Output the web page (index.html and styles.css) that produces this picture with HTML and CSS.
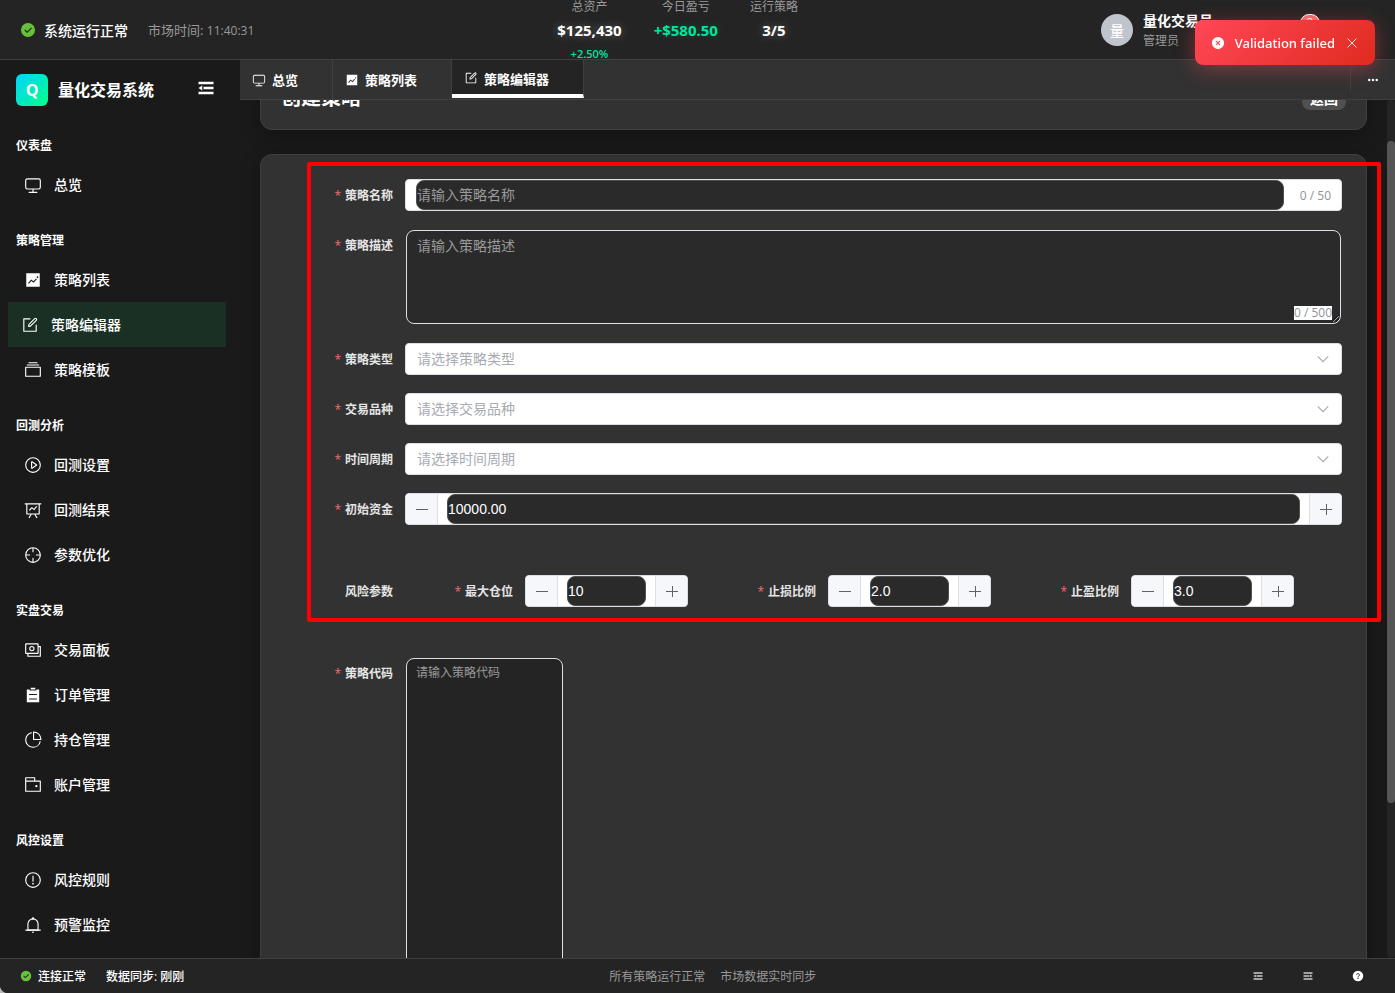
FILE: index.html
```html
<!DOCTYPE html>
<html lang="zh-CN">
<head>
<meta charset="utf-8">
<title>量化交易系统</title>
<link rel="stylesheet" href="styles.css">
</head>
<body>
<svg class="sprite" aria-hidden="true">
  <symbol id="i-monitor" viewBox="0 0 1024 1024"><path d="M544 768v128h192a32 32 0 1 1 0 64H288a32 32 0 1 1 0-64h192V768H192A128 128 0 0 1 64 640V256a128 128 0 0 1 128-128h640a128 128 0 0 1 128 128v384a128 128 0 0 1-128 128H544zM192 192a64 64 0 0 0-64 64v384a64 64 0 0 0 64 64h640a64 64 0 0 0 64-64V256a64 64 0 0 0-64-64H192z"/></symbol>
  <symbol id="i-trend" viewBox="0 0 1024 1024"><path d="M128 896V128h768v768H128zm291.712-327.296 128 102.4 180.16-201.792-47.744-42.624-139.84 156.608-128-102.4-180.16 201.792 47.744 42.624 139.84-156.608zM816 352a48 48 0 1 0-96 0 48 48 0 0 0 96 0z"/></symbol>
  <symbol id="i-edit" viewBox="0 0 1024 1024"><path d="M832 512a32 32 0 1 1 64 0v352a32 32 0 0 1-32 32H160a32 32 0 0 1-32-32V160a32 32 0 0 1 32-32h352a32 32 0 0 1 0 64H192v640h640V512z"/><path d="m469.952 554.24 52.8-7.552L847.104 222.4a32 32 0 1 0-45.248-45.248L477.44 501.44l-7.552 52.8zm422.4-422.4a96 96 0 0 1 0 135.808l-331.84 331.84a32 32 0 0 1-18.112 9.088L436.8 623.68a32 32 0 0 1-36.224-36.224l15.104-105.6a32 32 0 0 1 9.024-18.112l331.904-331.84a96 96 0 0 1 135.744 0z"/></symbol>
  <symbol id="i-files" viewBox="0 0 1024 1024"><path d="M128 384v448h768V384H128zm-32-64h832a32 32 0 0 1 32 32v512a32 32 0 0 1-32 32H96a32 32 0 0 1-32-32V352a32 32 0 0 1 32-32zm64-128h704v64H160zm96-128h512v64H256z"/></symbol>
  <symbol id="i-play" viewBox="0 0 1024 1024"><path d="M512 64a448 448 0 1 1 0 896 448 448 0 0 1 0-896zm0 832a384 384 0 0 0 0-768 384 384 0 0 0 0 768zm-48-247.616L668.608 512 464 375.616v272.768zm10.624-342.656 249.472 166.336a48 48 0 0 1 0 79.872L474.624 718.272A48 48 0 0 1 400 678.336V345.6a48 48 0 0 1 74.624-39.936z"/></symbol>
  <symbol id="i-dataline" viewBox="0 0 1024 1024"><path d="M359.168 768H160a32 32 0 0 1-32-32V192H64a32 32 0 0 1 0-64h896a32 32 0 1 1 0 64h-64v544a32 32 0 0 1-32 32H665.216l110.848 192h-73.856L591.36 768H433.024L322.176 960H248.32l110.848-192zM832 192H192v512h640V192zM342.656 534.656a32 32 0 1 1-45.312-45.312L444.992 341.76l125.44 94.08L679.04 300.032a32 32 0 1 1 49.92 39.936L581.632 524.224 451.008 426.24 342.656 534.592z"/></symbol>
  <symbol id="i-aim" viewBox="0 0 1024 1024"><path d="M512 896a384 384 0 1 0 0-768 384 384 0 0 0 0 768zm0 64a448 448 0 1 1 0-896 448 448 0 0 1 0 896z"/><path d="M512 96a32 32 0 0 1 32 32v192a32 32 0 0 1-64 0V128a32 32 0 0 1 32-32zm0 576a32 32 0 0 1 32 32v192a32 32 0 1 1-64 0V704a32 32 0 0 1 32-32zM96 512a32 32 0 0 1 32-32h192a32 32 0 0 1 0 64H128a32 32 0 0 1-32-32zm576 0a32 32 0 0 1 32-32h192a32 32 0 1 1 0 64H704a32 32 0 0 1-32-32z"/></symbol>
  <symbol id="i-money" viewBox="0 0 1024 1024"><g fill="none" stroke="currentColor" stroke-width="64"><rect x="96" y="160" width="704" height="544" rx="16"/><path d="M224 704v160h704V320H800"/><circle cx="448" cy="432" r="120"/></g></symbol>
  <symbol id="i-list" viewBox="0 0 1024 1024"><path d="M704 192h160v736H160V192h160v64h384v-64zM288 512h448v-64H288v64zm0 256h448v-64H288v64zm96-576V96h256v96H384z"/></symbol>
  <symbol id="i-pie" viewBox="0 0 1024 1024"><path d="M448 68.48v64.832A384.128 384.128 0 0 0 512 896a384.128 384.128 0 0 0 378.688-320h64.768A448.128 448.128 0 0 1 64 512 448.128 448.128 0 0 1 448 68.48z"/><path d="M576 97.28V448h350.72A384.064 384.064 0 0 0 576 97.28zM512 64V33.152A448 448 0 0 1 990.848 512H512V64z"/></symbol>
  <symbol id="i-wallet" viewBox="0 0 1024 1024"><path d="M640 288h-64V128H128v160H64V96a32 32 0 0 1 32-32h512a32 32 0 0 1 32 32v192z"/><path d="M128 320v512h768V320H128zm-32-64h832a32 32 0 0 1 32 32v576a32 32 0 0 1-32 32H96a32 32 0 0 1-32-32V288a32 32 0 0 1 32-32z"/><path d="M704 640a64 64 0 1 1 0-128 64 64 0 0 1 0 128z"/></symbol>
  <symbol id="i-warning" viewBox="0 0 1024 1024"><path d="M512 64a448 448 0 1 1 0 896 448 448 0 0 1 0-896zm0 832a384 384 0 0 0 0-768 384 384 0 0 0 0 768zm48-176a48 48 0 1 1-96 0 48 48 0 0 1 96 0zm-48-464a32 32 0 0 1 32 32v288a32 32 0 0 1-64 0V288a32 32 0 0 1 32-32z"/></symbol>
  <symbol id="i-bell" viewBox="0 0 1024 1024"><path d="M512 64a64 64 0 0 1 64 64v64H448v-64a64 64 0 0 1 64-64z"/><path d="M256 768h512V448a256 256 0 1 0-512 0v320zm256-640a320 320 0 0 1 320 320v384H192V448a320 320 0 0 1 320-320z"/><path d="M96 768h832q32 0 32 32t-32 32H96q-32 0-32-32t32-32zm352 128h128a64 64 0 0 1-128 0z"/></symbol>
  <symbol id="i-fold" viewBox="0 0 1024 1024"><path d="M896 192H128v128h768V192zm0 256H384v128h512V448zm0 256H128v128h768V704zM320 384 128 512l192 128V384z"/></symbol>
  <symbol id="i-expand" viewBox="0 0 1024 1024"><path d="M128 192h768v128H128V192zm0 256h512v128H128V448zm0 256h768v128H128V704zm576-352 192 160-192 128V352z"/></symbol>
  <symbol id="i-success" viewBox="0 0 1024 1024"><path d="M512 64a448 448 0 1 1 0 896 448 448 0 0 1 0-896zm-55.808 536.384-99.52-99.584a38.4 38.4 0 1 0-54.336 54.336l126.72 126.72a38.272 38.272 0 0 0 54.336 0l262.4-262.464a38.4 38.4 0 1 0-54.272-54.336L456.192 600.384z"/></symbol>
  <symbol id="i-error" viewBox="0 0 1024 1024"><path d="M512 64a448 448 0 1 1 0 896 448 448 0 0 1 0-896zm0 393.664L407.936 353.6a38.4 38.4 0 1 0-54.336 54.336L457.664 512 353.6 616.064a38.4 38.4 0 1 0 54.336 54.336L512 566.336 616.064 670.4a38.4 38.4 0 1 0 54.336-54.336L566.336 512 670.4 407.936a38.4 38.4 0 1 0-54.336-54.336L512 457.664z"/></symbol>
  <symbol id="i-help" viewBox="0 0 1024 1024"><circle cx="512" cy="512" r="448"/><path d="M392 420a120 112 0 1 1 190 88c-44 30-70 52-70 110" fill="none" stroke="#232323" stroke-width="84"/><circle cx="512" cy="724" r="54" fill="#232323"/></symbol>
  <symbol id="i-close" viewBox="0 0 16 16"><path d="M3 3l10 10M13 3L3 13" fill="none" stroke="currentColor" stroke-width="1"/></symbol>
  <symbol id="i-down" viewBox="0 0 16 16"><path d="M2 5l6 6 6-6" fill="none" stroke="currentColor" stroke-width="1.3"/></symbol>
  <symbol id="i-minus" viewBox="0 0 14 14"><path d="M1 7.5h12" fill="none" stroke="currentColor"/></symbol>
  <symbol id="i-plus" viewBox="0 0 14 14"><path d="M1 7.5h12M7.5 2v11" fill="none" stroke="currentColor"/></symbol>
  <symbol id="i-more" viewBox="0 0 16 16"><circle cx="3" cy="8" r="1.7"/><circle cx="8" cy="8" r="1.7"/><circle cx="13" cy="8" r="1.7"/></symbol>
</svg>

<div class="app">
  <header class="topbar">
    <div class="top-left">
      <div class="status"><svg class="ico ico-16 ok"><use href="#i-success"/></svg><span>系统运行正常</span></div>
      <span class="time">市场时间: <span class="clock">11:40:31</span></span>
    </div>
    <div class="stats">
      <div class="stat"><span class="stat-label">总资产</span><span class="stat-value">$125,430</span><span class="stat-change">+2.50%</span></div>
      <div class="stat"><span class="stat-label">今日盈亏</span><span class="stat-value gain">+$580.50</span></div>
      <div class="stat"><span class="stat-label">运行策略</span><span class="stat-value">3/5</span></div>
    </div>
    <div class="top-right">
      <div class="user">
        <span class="avatar">量</span>
        <div class="user-info"><span class="user-name">量化交易员</span><span class="user-role">管理员</span></div>
      </div>
      <button class="bell" aria-label="通知"><svg class="ico ico-16"><use href="#i-bell"/></svg><span class="badge">3</span></button>
    </div>
  </header>

  <div class="body">
    <aside class="sidebar">
      <div class="brand">
        <span class="logo">Q</span><span class="brand-name">量化交易系统</span>
        <button class="fold" aria-label="折叠菜单"><svg class="ico ico-20"><use href="#i-fold"/></svg></button>
      </div>
      <nav class="menu">
        <section class="group"><h2 class="group-title">仪表盘</h2>
          <a class="item" href="#"><svg class="ico ico-18"><use href="#i-monitor"/></svg>总览</a>
        </section>
        <section class="group"><h2 class="group-title">策略管理</h2>
          <a class="item" href="#"><svg class="ico ico-18"><use href="#i-trend"/></svg>策略列表</a>
          <a class="item active" href="#"><svg class="ico ico-18"><use href="#i-edit"/></svg>策略编辑器</a>
          <a class="item" href="#"><svg class="ico ico-18"><use href="#i-files"/></svg>策略模板</a>
        </section>
        <section class="group"><h2 class="group-title">回测分析</h2>
          <a class="item" href="#"><svg class="ico ico-18"><use href="#i-play"/></svg>回测设置</a>
          <a class="item" href="#"><svg class="ico ico-18"><use href="#i-dataline"/></svg>回测结果</a>
          <a class="item" href="#"><svg class="ico ico-18"><use href="#i-aim"/></svg>参数优化</a>
        </section>
        <section class="group"><h2 class="group-title">实盘交易</h2>
          <a class="item" href="#"><svg class="ico ico-18"><use href="#i-money"/></svg>交易面板</a>
          <a class="item" href="#"><svg class="ico ico-18"><use href="#i-list"/></svg>订单管理</a>
          <a class="item" href="#"><svg class="ico ico-18"><use href="#i-pie"/></svg>持仓管理</a>
          <a class="item" href="#"><svg class="ico ico-18"><use href="#i-wallet"/></svg>账户管理</a>
        </section>
        <section class="group"><h2 class="group-title">风控设置</h2>
          <a class="item" href="#"><svg class="ico ico-18"><use href="#i-warning"/></svg>风控规则</a>
          <a class="item" href="#"><svg class="ico ico-18"><use href="#i-bell"/></svg>预警监控</a>
        </section>
      </nav>
    </aside>

    <main class="main">
      <div class="tabs">
        <a class="tab" href="#"><svg class="ico ico-14"><use href="#i-monitor"/></svg>总览</a>
        <a class="tab" href="#"><svg class="ico ico-14"><use href="#i-trend"/></svg>策略列表</a>
        <a class="tab current" href="#"><svg class="ico ico-14"><use href="#i-edit"/></svg>策略编辑器</a>
        <div class="tabs-more"><button class="more" aria-label="更多"><svg class="ico ico-12"><use href="#i-more"/></svg></button></div>
      </div>
      <div class="viewport">
        <div class="scroller" id="scroller">
          <div class="page">
            <div class="card page-head"><h1 class="page-title">创建策略</h1><button class="back">返回</button></div>
            <form class="card form">
              <div class="row"><label class="label req" for="name">策略名称</label>
                <div class="box name-box"><input class="dark" id="name" type="text" placeholder="请输入策略名称"><span class="count">0 / 50</span></div></div>
              <div class="row"><label class="label req" for="desc">策略描述</label>
                <div class="area-box"><textarea class="area" id="desc" placeholder="请输入策略描述"></textarea><span class="area-count">0 / 500</span></div></div>
              <div class="row"><label class="label req" for="type">策略类型</label>
                <div class="select-box"><select class="select" id="type"><option>请选择策略类型</option></select><svg class="ico ico-14 chevron"><use href="#i-down"/></svg></div></div>
              <div class="row"><label class="label req" for="symbol">交易品种</label>
                <div class="select-box"><select class="select" id="symbol"><option>请选择交易品种</option></select><svg class="ico ico-14 chevron"><use href="#i-down"/></svg></div></div>
              <div class="row"><label class="label req" for="period">时间周期</label>
                <div class="select-box"><select class="select" id="period"><option>请选择时间周期</option></select><svg class="ico ico-14 chevron"><use href="#i-down"/></svg></div></div>
              <div class="row"><label class="label req" for="capital">初始资金</label>
                <div class="box number"><button type="button" class="step" aria-label="减少"><svg class="ico ico-14"><use href="#i-minus"/></svg></button><input class="dark" id="capital" type="text" value="10000.00"><button type="button" class="step" aria-label="增加"><svg class="ico ico-14"><use href="#i-plus"/></svg></button></div></div>
              <div class="row risk"><span class="label">风险参数</span>
                <div class="risk-grid">
                  <div class="row"><label class="label req" for="pos">最大仓位</label>
                    <div class="box number"><button type="button" class="step" aria-label="减少"><svg class="ico ico-14"><use href="#i-minus"/></svg></button><input class="dark" id="pos" type="text" value="10"><button type="button" class="step" aria-label="增加"><svg class="ico ico-14"><use href="#i-plus"/></svg></button></div></div>
                  <div class="row"><label class="label req" for="stop">止损比例</label>
                    <div class="box number"><button type="button" class="step" aria-label="减少"><svg class="ico ico-14"><use href="#i-minus"/></svg></button><input class="dark" id="stop" type="text" value="2.0"><button type="button" class="step" aria-label="增加"><svg class="ico ico-14"><use href="#i-plus"/></svg></button></div></div>
                  <div class="row"><label class="label req" for="take">止盈比例</label>
                    <div class="box number"><button type="button" class="step" aria-label="减少"><svg class="ico ico-14"><use href="#i-minus"/></svg></button><input class="dark" id="take" type="text" value="3.0"><button type="button" class="step" aria-label="增加"><svg class="ico ico-14"><use href="#i-plus"/></svg></button></div></div>
                </div></div>
              <div class="row"><label class="label req" for="code">策略代码</label>
                <textarea class="code" id="code" placeholder="请输入策略代码"></textarea></div>
              <div class="highlight"></div>
            </form>
          </div>
        </div>
        <div class="track" id="track"><div class="thumb" id="thumb"></div></div>
      </div>
    </main>
  </div>

  <footer class="footer">
    <div class="foot-left"><span class="foot-status"><svg class="ico ico-12 ok"><use href="#i-success"/></svg>连接正常</span><span>数据同步: 刚刚</span></div>
    <div class="foot-mid"><span>所有策略运行正常</span><span>市场数据实时同步</span></div>
    <div class="foot-right">
      <button class="foot-btn dim" aria-label="收起"><svg class="ico ico-12"><use href="#i-fold"/></svg></button>
      <button class="foot-btn dim" aria-label="展开"><svg class="ico ico-12"><use href="#i-expand"/></svg></button>
      <button class="foot-btn" aria-label="帮助"><svg class="ico ico-12"><use href="#i-help"/></svg></button>
    </div>
  </footer>
</div>

<div class="toast" role="alert"><svg class="ico ico-14"><use href="#i-error"/></svg><span class="toast-text">Validation failed</span><button class="toast-close" aria-label="关闭"><svg class="ico ico-14"><use href="#i-close"/></svg></button></div>
<script src="app.js"></script>
</body>
</html>
```

FILE: styles.css
```css
* { box-sizing: border-box; }
body {
  margin: 0;
  background: #b8b8b8;
  color: #fff;
  font-family: "Open Sans", "Noto Sans CJK SC", sans-serif;
  font-size: 14px;
}
button { border: 0; padding: 0; background: none; color: inherit; font: inherit; display: flex; align-items: center; justify-content: center; }
a { color: inherit; text-decoration: none; }
h1, h2 { margin: 0; }
.sprite { position: absolute; width: 0; height: 0; }
.ico { fill: currentColor; flex: none; display: block; }
.ico-12 { width: 12px; height: 12px; }
.ico-14 { width: 14px; height: 14px; }
.ico-16 { width: 16px; height: 16px; }
.ico-18 { width: 18px; height: 18px; }
.ico-20 { width: 20px; height: 20px; }
.ok { color: #67c23a; }

.app { height: 100vh; display: flex; flex-direction: column; overflow: hidden; background: #1a1a1a; border-bottom-left-radius: 8px; }

/* top bar */
.topbar { height: 60px; flex: none; display: flex; align-items: center; justify-content: space-between; padding: 0 20px; background: #242424; border-bottom: 1px solid #404040; overflow: hidden; }
.top-left { display: flex; align-items: center; gap: 20px; }
.status { display: flex; align-items: center; gap: 8px; font-weight: 500; }
.time { font-size: 13px; color: #999; }
.clock { font-size: 12px; }
.stats { display: flex; align-items: flex-start; gap: 32px; height: 60px; }
.stat { display: flex; flex-direction: column; align-items: center; }
.stat-label { font-size: 12px; line-height: 14px; color: #999; }
.stat-value { font-size: 15px; font-weight: 700; line-height: 32px; text-shadow: 0 0 10px rgba(255, 255, 255, .3); }
.stat-change { font-size: 11px; font-weight: 600; line-height: 16px; color: #00e5a0; }
.gain { color: #00e5a0; text-shadow: 0 0 10px rgba(0, 229, 155, .2); }
.top-right { display: flex; align-items: center; justify-content: space-between; width: 274px; }
.user { display: flex; align-items: center; gap: 10px; }
.avatar { width: 32px; height: 32px; border-radius: 50%; background: #c0c4cc; display: flex; align-items: center; justify-content: center; font-weight: 500; }
.user-info { display: flex; flex-direction: column; padding-top: 2px; }
.user-name { font-weight: 700; line-height: 20px; }
.user-role { font-size: 12px; line-height: 20px; color: #999; }
.bell { position: relative; width: 32px; height: 32px; margin-right: 64px; }
.badge { position: absolute; top: 0; right: -9px; width: 20px; height: 18px; border: 1px solid #fff; border-radius: 9px; background: #f56c6c; font-size: 12px; line-height: 16px; text-align: center; }

.body { flex: 1; min-height: 0; display: flex; }

/* sidebar */
.sidebar { width: 240px; flex: none; overflow: hidden; }
.brand { height: 60px; display: flex; align-items: center; padding: 0 24px 0 16px; }
.logo { width: 32px; height: 32px; margin-right: 10px; border-radius: 6px; background: linear-gradient(135deg, #00d4ff, #00ff88); display: flex; align-items: center; justify-content: center; font-weight: 700; font-size: 16px; }
.brand-name { padding-bottom: 2px; font-size: 16px; font-weight: 700; }
.fold { margin-left: auto; padding-bottom: 4px; }
.menu { padding: 8px 14px 0 8px; }
.group { margin-bottom: 16px; }
.group-title { height: 34px; padding-left: 8px; font-size: 12px; line-height: 36px; font-weight: 700; }
.item { display: flex; align-items: center; gap: 12px; height: 45px; padding: 0 0 2px 16px; font-weight: 500; }
.item .ico { margin-top: 2px; }
.item.active { padding-left: 13px; background: #1a3024; }

/* tabs */
.main { flex: 1; min-width: 0; display: flex; flex-direction: column; }
.tabs { height: 40px; flex: none; display: flex; background: #323232; border-bottom: 1px solid #404040; }
.tab { display: flex; align-items: center; gap: 6px; padding: 0 34px 0 12px; border-right: 1px solid #404040; font-size: 13px; font-weight: 700; }
.tab.current { height: 38px; background: #242424; border-bottom: 4px solid #fff; padding-top: 2px; }
.tabs-more { margin-left: auto; display: flex; align-items: center; }
.more { width: 45px; height: 24px; border-left: 1px solid #404040; }

/* scrolling page */
.viewport { flex: 1; min-height: 0; display: flex; }
.scroller { flex: 1; min-width: 0; overflow: auto; scrollbar-width: none; }
.scroller::-webkit-scrollbar { display: none; }
.track { width: 8px; flex: none; background: #242424; border-radius: 4px; }
.thumb { background: #555; border-radius: 4px; }
.page { padding: 20px; display: flex; flex-direction: column; gap: 24px; }
.card { background: #323232; border: 1px solid #404040; border-radius: 12px; box-shadow: 0 4px 20px rgba(0, 0, 0, .3); }
.page-head { display: flex; align-items: center; justify-content: space-between; min-height: 63px; padding: 0 20px 2px; }
.page-title { font-size: 20px; line-height: 28px; font-weight: 700; }
.back { width: 44px; height: 24px; border-radius: 8px; background: #505050; font-weight: 700; }

/* form */
.form { position: relative; padding: 24px; display: flex; flex-direction: column; gap: 18px; }
.row { display: flex; min-width: 0; }
.label { width: 120px; height: 32px; flex: none; padding-right: 12px; text-align: right; font-size: 12px; line-height: 34px; font-weight: 700; color: #e5e5e5; }
.req::before { content: "*"; color: #f56c6c; margin-right: 4px; font-weight: 400; }
.box { flex: 1; min-width: 0; display: flex; height: 32px; border: 1px solid #dcdfe6; border-radius: 4px; background: #fff; overflow: hidden; }
.dark { flex: 1; min-width: 0; height: 30px; padding: 0; border: 1px solid #505050; border-radius: 8px; background: #2a2a2a; color: #fff; font-family: "Liberation Sans", "Noto Sans CJK SC", sans-serif; font-size: 14px; }
.dark::placeholder, .area::placeholder { color: #999; }
.name-box { padding: 0 10px; gap: 16px; }
.count { font-size: 12px; line-height: 32px; color: #909399; }
.number { padding: 0; }
.number .dark { margin: 0 9px; }
.step { width: 32px; flex: none; background: #f5f7fa; color: #606266; }
.step:first-child { border-right: 1px solid #dcdfe6; }
.step:last-child { border-left: 1px solid #dcdfe6; }
.area-box { flex: 1; position: relative; display: flex; padding: 1px; height: 96px; }
.area { flex: 1; min-width: 0; padding: 4px 10px; border: 1px solid #dcdfe6; border-radius: 8px; background: #2a2a2a; color: #fff; font-family: inherit; font-size: 14px; line-height: 21px; resize: vertical; }
.area-count { position: absolute; right: 10px; bottom: 5px; background: #fff; color: #909399; font-size: 12px; line-height: 14px; }
.select-box { flex: 1; position: relative; display: flex; }
.select { flex: 1; height: 32px; padding: 0 11px 2px; appearance: none; border: 1px solid #dcdfe6; border-radius: 4px; background: #fff; color: #a8abb2; font-family: inherit; font-size: 14px; }
.chevron { position: absolute; right: 12px; top: 9px; color: #a8abb2; pointer-events: none; }
.risk { padding: 32px 0; }
.risk-grid { flex: 1; min-width: 0; display: grid; grid-template-columns: repeat(3, minmax(0, 1fr)); gap: 20px; padding-right: 48px; }
.code { width: 157px; height: 456px; margin: 1px 0 0 1px; padding: 5px 9px; border: 1px solid #dcdfe6; border-radius: 8px; background: #242424; color: #fff; font-family: inherit; font-size: 12px; line-height: 18px; resize: none; }
.code::placeholder { color: #999; }
.highlight { position: absolute; left: 46px; right: -15px; top: 7px; height: 460px; border: 4px solid #f00; border-radius: 2px; pointer-events: none; }

/* footer */
.footer { height: 35px; flex: none; display: flex; align-items: center; justify-content: space-between; padding: 0 20px; background: #242424; border-top: 1px solid #404040; font-size: 12px; }
.foot-left { display: flex; gap: 20px; font-weight: 500; }
.foot-status { display: flex; align-items: center; gap: 6px; }
.foot-mid { display: flex; gap: 15px; color: #999; }
.foot-right { display: flex; gap: 16px; }
.foot-btn { width: 34px; height: 24px; }
.dim { color: #ccc; }

/* notification */
.toast { position: fixed; top: 20px; right: 20px; height: 45px; display: flex; align-items: center; padding: 0 16px; border-radius: 8px; background: linear-gradient(135deg, #ff4757, #e02b20); box-shadow: 0 4px 20px rgba(255, 71, 87, .4); }
.toast-text { margin: 0 10px; font-family: "Noto Sans", sans-serif; font-size: 13px; font-weight: 500; }
```

FILE: app.js
```js
const scroller = document.getElementById('scroller');
const track = document.getElementById('track');
const thumb = document.getElementById('thumb');

function updateThumb() {
  const scale = track.clientHeight / scroller.scrollHeight;
  thumb.style.height = Math.round(scroller.clientHeight * scale) + 'px';
  thumb.style.transform = 'translateY(' + Math.round(scroller.scrollTop * scale) + 'px)';
}

scroller.addEventListener('scroll', updateThumb);
window.addEventListener('resize', updateThumb);
scroller.scrollTop = 53;
updateThumb();
```
